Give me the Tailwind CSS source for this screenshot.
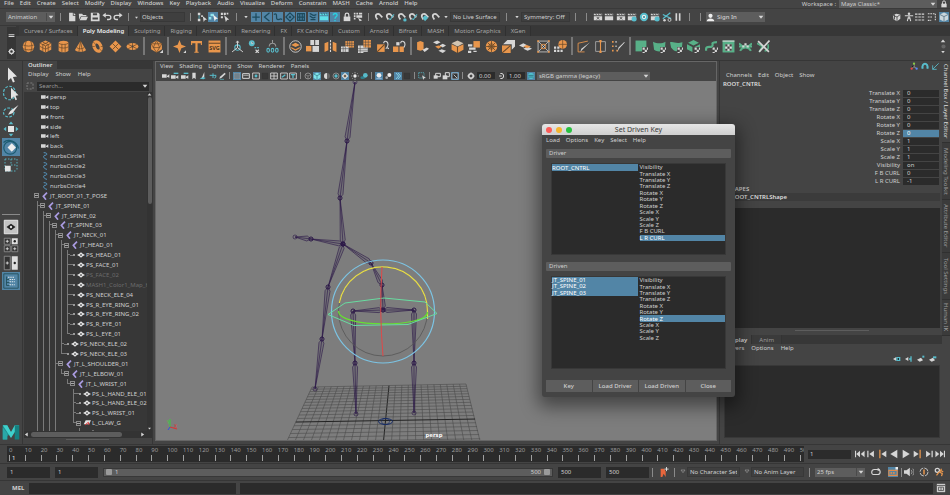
<!DOCTYPE html>
<html lang="en">

<head>
    <meta charset="UTF-8">
    <meta name="viewport" content="width=device-width, initial-scale=1.0">
    <title>Maya - Set Driven Key</title>
    <script src="https://cdn.jsdelivr.net/npm/@tailwindcss/browser@4"></script>
</head>

<body class="flex flex-col h-screen overflow-hidden bg-[#444444] text-[#cfcfcf] text-[6px] leading-[8px] font-['Noto_Sans','Open_Sans',sans-serif]">

    <!-- Main menu -->
    <header class="flex justify-between h-[9px] shrink-0 border-b border-[#3a3a3a]">
        <nav class="flex gap-[6px] pl-[4px] -mt-[2px] font-medium" data-menu="File|Edit|Create|Select|Modify|Display|Windows|Key|Playback|Audio|Visualize|Deform|Constrain|MASH|Cache|Arnold|Help"></nav>
        <div class="flex items-center gap-[3px] pr-[2px]">
            <label for="workspace">Workspace :</label>
            <div class="flex items-center bg-[#5d5d5d] w-[98px] h-[8px]">
                <select id="workspace" class="appearance-none flex-1 px-[2px] leading-[8px] outline-none"><option>Maya Classic*</option></select>
                <span class="flex w-[8px]" data-icon="down"></span>
            </div>
            <span class="flex w-[8px]" data-icon="lock"></span>
        </div>
    </header>

    <!-- Status line -->
    <div class="flex items-center h-[17px] shrink-0 pl-[6px] border-b border-[#383838]">
        <div class="flex items-center bg-[#5d5d5d] w-[49px] h-[10px]">
            <select aria-label="Menu set" class="appearance-none flex-1 min-w-0 pl-[2px] outline-none"><option>Animation</option></select>
            <span class="flex w-[9px] border-l border-[#4a4a4a]" data-icon="down"></span>
        </div>
        <i class="w-px h-[8px] bg-[#8a8a8a] mx-[5px]"></i>
        <div class="flex justify-around w-[58px]" data-icons="new open save undo redo"></div>
        <i class="w-px h-[8px] bg-[#8a8a8a] mx-[4px]"></i>
        <span class="flex w-[7px]" data-icon="downs"></span>
        <input aria-label="Selection mode" value="Objects" class="w-[45px] h-[10px] px-px bg-[#3f3f3f] border border-[#383838] outline-none">
        <i class="w-px h-[8px] bg-[#8a8a8a] mx-[5px]"></i>
        <div class="flex justify-around w-[35px]" data-icons="selh *selo selc"></div>
        <i class="w-px h-[8px] bg-[#8a8a8a] mx-[5px]"></i>
        <span class="flex w-[8px]" data-icon="downs"></span>
        <div class="flex justify-around w-[91px]" data-icons="*plus *angle *curve *surf *deform *dyn *rend *misc"></div>
        <div class="flex justify-around w-[23px]" data-icons="lock hilite"></div>
        <i class="w-px h-[8px] bg-[#8a8a8a] mx-[4px]"></i>
        <div class="flex justify-around w-[69px]" data-icons="magnet magnetb magnetc magnetb magneta magnet"></div>
        <span class="flex w-[8px]" data-icon="downs"></span>
        <input aria-label="Live surface" value="No Live Surface" class="w-[50px] h-[10px] px-[2px] bg-[#3f3f3f] border border-[#383838] outline-none">
        <i class="w-px h-[8px] bg-[#8a8a8a] mx-[6px]"></i>
        <span class="flex w-[8px]" data-icon="downs"></span>
        <input aria-label="Symmetry" value="Symmetry: Off" class="w-[49px] h-[10px] px-[2px] bg-[#3f3f3f] border border-[#383838] outline-none">
        <i class="w-px h-[8px] bg-[#8a8a8a] mx-[5px]"></i>
        <i class="w-px h-[8px] bg-[#8a8a8a] mx-[5px]"></i>
        <div class="flex justify-around w-[92px]" data-icons="clap clapb clap clapc ring clapc cut pause"></div>
        <i class="w-px h-[8px] bg-[#8a8a8a] mx-[5px]"></i>
        <i class="w-px h-[8px] bg-[#8a8a8a] mx-[5px]"></i>
        <button class="flex items-center gap-[2px] bg-[#5d5d5d] w-[59px] h-[10px] font-medium">
            <span class="flex w-[9px]" data-icon="user"></span>
            <span class="flex-1 text-left">Sign In</span>
            <span class="flex w-[8px]" data-icon="down"></span>
        </button>
        <div class="flex justify-around w-[59px] ml-auto" data-icons="cubeg figure sliders rows *cube"></div>
    </div>

    <!-- Shelf -->
    <div class="flex h-[34px] shrink-0">
        <div class="flex flex-col items-center justify-around w-[9px] ml-[7px] my-px bg-[#363636]">
            <span class="flex w-[7px]" data-icon="bars"></span>
            <span class="flex w-[7px]" data-icon="gear"></span>
        </div>
        <div class="flex-1 min-w-0">
            <nav id="shelfTabs" class="flex h-[10px] bg-[#373737] pl-[3px]"></nav>
            <div class="flex items-center h-[20px] pl-[4px]">
                <div class="flex justify-around w-[121px]" data-shelf="sphere pcube cyl cone torus plane disc"></div>
                <i class="w-[2px] h-[18px] bg-[#777777] mx-[2px]"></i>
                <div class="flex justify-around w-[18px]" data-shelf="plato"></div>
                <i class="w-[2px] h-[18px] bg-[#777777] mx-[2px]"></i>
                <div class="flex justify-around w-[52px]" data-shelf="star type svgt"></div>
                <i class="w-[2px] h-[18px] bg-[#777777] mx-[2px]"></i>
                <div class="flex justify-around w-[52px]" data-shelf="axis clock zeros"></div>
                <i class="w-[2px] h-[18px] bg-[#777777] mx-[2px]"></i>
                <div class="flex justify-around w-[121px]" data-shelf="layers combine mirror gridw gridx rotate rotateb"></div>
                <i class="w-[2px] h-[18px] bg-[#777777] mx-[2px]"></i>
                <div class="flex justify-around w-[155px]" data-shelf="extrude bridge pcube2 append wheel bevel planes xbox cubes"></div>
                <i class="w-[2px] h-[18px] bg-[#777777] mx-[2px]"></i>
                <div class="flex justify-around w-[52px]" data-shelf="knife loop pen"></div>
                <i class="w-[2px] h-[18px] bg-[#777777] mx-[2px]"></i>
                <div class="flex justify-around w-[139px]" data-shelf="uv1 uv2 uv3 uv4 uv5 uv6 uv7 uv8"></div>
                <div class="flex flex-col items-center w-[8px] ml-auto mr-[3px]">
                    <span class="flex w-[6px]" data-icon="up"></span>
                    <span class="flex w-[5px]" data-icon="dot"></span>
                    <span class="flex w-[6px]" data-icon="down"></span>
                </div>
            </div>
        </div>
    </div>

    <!-- Workspace -->
    <main class="flex flex-1 min-h-0 border-t border-[#363636]">

        <!-- Toolbox -->
        <aside class="flex flex-col items-center w-[22px] pt-[5px] shrink-0">
            <div class="flex flex-col w-[18px]" data-tools="arrow lasso brush move *spin scale"></div>
            <hr class="w-[18px] border-[#8a8a8a] mt-[40px] mb-[3px]">
            <div class="flex flex-col w-[18px]" data-tools="view1 view4 view2 *tree"></div>
            <div class="flex flex-col w-[18px] mt-auto mb-[3px]" data-tools="maya"></div>
        </aside>

        <!-- Outliner -->
        <section class="flex flex-col w-[131px] shrink-0 bg-[#444444] border-x border-[#363636]">
            <div class="bg-[#373737] h-[8px] flex"><button class="bg-[#444444] px-[5px] font-semibold text-[#dddddd]">Outliner</button></div>
            <nav class="flex gap-[7px] pl-[5px] mt-px" data-menu="Display|Show|Help"></nav>
            <div class="flex items-center gap-[3px] px-[3px] h-[12px] mt-[2px]">
                <span class="flex w-[8px]" data-icon="focus"></span>
                <div class="flex flex-1 items-center h-[9px] bg-[#2b2b2b]">
                    <input type="search" aria-label="Search" placeholder="Search..." class="flex-1 min-w-0 px-[2px] outline-none placeholder:text-[#9a9a9a]">
                    <span class="flex w-[8px]" data-icon="down"></span>
                </div>
            </div>
            <div class="flex flex-1 min-h-0 bg-[#373737] ml-px overflow-hidden">
                <ul id="outliner" class="grid auto-rows-fr h-[346px] flex-1 min-w-0 overflow-hidden pl-[10px]"></ul>
                <div class="w-[5px] flex flex-col items-center bg-[#333333]">
                    <span class="flex w-[5px]" data-icon="up"></span>
                    <span class="w-[4px] h-[107px] rounded-full bg-[#5d5d5d]"></span>
                    <span class="flex w-[5px] mt-auto" data-icon="down"></span>
                </div>
            </div>
            <div class="flex items-center h-[7px] bg-[#333333] gap-[2px] ml-px">
                <span class="flex w-[5px]" data-icon="left"></span>
                <span class="w-[91px] h-[5px] rounded-full bg-[#5d5d5d]"></span>
                <span class="flex w-[5px] ml-auto mr-[7px]" data-icon="right"></span>
            </div>
            <hr class="w-[43px] border-[#5d5d5d] mx-auto mt-px mb-[4px]">
        </section>

        <!-- Viewport panel -->
        <section class="flex flex-col flex-1 min-w-0 mx-[2px] mb-[3px] border border-[#666666]">
            <nav class="flex gap-[6px] pl-[4px]" data-menu="View|Shading|Lighting|Show|Renderer|Panels"></nav>
            <div class="flex items-center h-[11px] pl-[5px]">
                <div class="flex justify-around w-[66px]" data-panel="cam camb camb mark sharp pan pencil"></div>
                <i class="w-px h-[7px] bg-[#8a8a8a] mx-[2px]"></i>
                <div class="flex justify-around w-[66px]" data-panel="*gridp film gate dim frame frameb framec"></div>
                <i class="w-px h-[7px] bg-[#8a8a8a] mx-[2px]"></i>
                <div class="flex justify-around w-[66px]" data-panel="wire *shade half wiret *check sun blob"></div>
                <i class="w-px h-[7px] bg-[#8a8a8a] mx-[2px]"></i>
                <div class="flex justify-around w-[38px]" data-panel="*light balls *aa dim"></div>
                <i class="w-px h-[7px] bg-[#8a8a8a] mx-[2px]"></i>
                <div class="flex justify-around w-[10px]" data-panel="iso"></div>
                <i class="w-px h-[7px] bg-[#8a8a8a] mx-[2px]"></i>
                <div class="flex justify-around w-[28px]" data-panel="stack stackb *xray"></div>
                <i class="w-px h-[7px] bg-[#8a8a8a] mx-[2px]"></i>
                <div class="flex justify-around w-[12px]" data-panel="gear"></div>
                <input aria-label="Exposure" value="0.00" class="w-[18px] h-[7px] px-[2px] bg-[#2b2b2b] outline-none">
                <div class="flex justify-around w-[12px]" data-panel="contrast"></div>
                <input aria-label="Gamma" value="1.00" class="w-[18px] h-[7px] px-[2px] bg-[#2b2b2b] outline-none">
                <div class="flex justify-around w-[12px]" data-panel="*color"></div>
                <div class="flex items-center bg-[#5d5d5d] w-[113px] h-[8px]">
                    <select aria-label="View transform" class="appearance-none flex-1 px-[2px] outline-none"><option>sRGB gamma (legacy)</option></select>
                    <span class="flex w-[8px]" data-icon="down"></span>
                </div>
            </div>
            <svg id="scene" class="flex-1 min-h-0 w-full bg-[#7d7d7d]" viewBox="156 81 560 360" preserveAspectRatio="xMinYMin slice"></svg>
        </section>

        <!-- Channel box / layer editor -->
        <section class="flex flex-col w-[223px] shrink-0 pl-[2px] border-l border-[#363636]">
            <div class="flex justify-end gap-[3px] pr-[2px] h-[10px]" data-panel="triad arch diag"></div>
            <nav class="flex gap-[6px] pl-[4px]" data-menu="Channels|Edit|Object|Show"></nav>
            <h2 class="leading-[10px] font-semibold pl-px text-[#dddddd]">ROOT_CNTRL</h2>
            <table class="w-full"><tbody id="channels"></tbody></table>
            <h3 class="font-semibold pl-[5px]">SHAPES</h3>
            <h3 class="bg-[#3b3b3b] font-semibold mr-[2px] pl-[9px] text-[#dddddd]">ROOT_CNTRLShape</h3>
            <div class="bg-[#2b2b2b] mt-[7px] h-[120px] mr-[2px]"></div>
            <hr class="w-[74px] border-[#5d5d5d] mx-auto mt-[2px] mb-[4px]">
            <div class="bg-[#373737] flex h-[9px]">
                <button class="bg-[#444444] px-[4px] font-semibold text-[#dddddd]">Display</button>
                <button class="px-[7px] text-[#9a9a9a] bg-[#3b3b3b] border-x border-[#333333]">Anim</button>
            </div>
            <nav class="flex gap-[7px] pl-[4px]" data-menu="Layers|Options|Help"></nav>
            <div class="flex justify-end gap-[4px] pr-[5px] h-[13px] items-center" data-panel="lay laydn laynew laysel"></div>
            <div class="flex-1 bg-[#2b2b2b] mx-[2px] mb-[6px] border border-[#383838]"></div>
        </section>

        <nav id="sideTabs" class="flex flex-col w-[8px] shrink-0 bg-[#444444]"></nav>
    </main>

    <!-- Time slider -->
    <div class="flex items-center h-[19px] shrink-0 pl-[7px] pr-[4px] border-t border-[#363636]">
        <div class="flex-1 min-w-0 overflow-hidden bg-[#2b2b2b] h-[16px]">
            <ol id="timeline" class="flex mr-[6px] h-full text-[#9a9a9a]"></ol>
        </div>
        <input aria-label="Current frame" value="1" class="w-[43px] h-[9px] ml-[4px] px-[2px] bg-[#2b2b2b] outline-none">
        <div class="flex justify-around w-[92px] ml-[3px]" data-icons="first prev prevk back play nextk next last"></div>
    </div>

    <!-- Range slider -->
    <div class="flex items-center h-[17px] shrink-0 pl-[7px] pr-[4px] border-t border-[#363636]">
        <input aria-label="Animation start" value="1" class="w-[43px] h-[11px] px-[3px] bg-[#2b2b2b] outline-none">
        <input aria-label="Range start" value="1" class="w-[43px] h-[11px] px-[3px] ml-[5px] bg-[#2b2b2b] outline-none">
        <div class="flex flex-1 items-center gap-[3px] h-[9px] ml-[5px] px-[2px] bg-[#5d5d5d] border border-[#383838]">
            <span class="size-[6px] rounded-[1px] bg-[#9a9a9a]"></span>
            <span>1</span>
            <span class="ml-auto">500</span>
            <span class="size-[6px] rounded-[1px] bg-[#9a9a9a]"></span>
        </div>
        <input aria-label="Range end" value="500" class="w-[43px] h-[11px] px-[3px] ml-[5px] bg-[#2b2b2b] outline-none">
        <input aria-label="Animation end" value="500" class="w-[43px] h-[11px] px-[3px] ml-[5px] bg-[#2b2b2b] outline-none">
        <i class="w-px h-[9px] bg-[#8a8a8a] ml-[3px]"></i>
        <div class="flex justify-around w-[21px]" data-icons="runner"></div>
        <i class="w-px h-[9px] bg-[#8a8a8a]"></i>
        <span class="flex w-[8px] ml-[4px]" data-icon="downo"></span>
        <input aria-label="Character set" value="No Character Set" class="w-[53px] h-[10px] px-[2px] bg-[#3f3f3f] border border-[#383838] outline-none">
        <span class="flex w-[8px] ml-[3px]" data-icon="downo"></span>
        <input aria-label="Animation layer" value="No Anim Layer" class="w-[53px] h-[10px] px-[2px] bg-[#3f3f3f] border border-[#383838] outline-none">
        <i class="w-px h-[9px] bg-[#8a8a8a] mx-[5px]"></i>
        <div class="flex items-center bg-[#5d5d5d] w-[50px] h-[9px]">
            <select aria-label="Playback speed" class="appearance-none flex-1 min-w-0 px-[2px] outline-none"><option>25 fps</option></select>
            <span class="flex w-[9px] border-l border-[#4a4a4a]" data-icon="down"></span>
        </div>
        <div class="flex justify-around w-[34px] ml-[2px]" data-icons="repeat *cache"></div>
        <i class="w-px h-[9px] bg-[#8a8a8a]"></i>
        <div class="flex justify-around w-[44px]" data-icons="sound auto prefs"></div>
    </div>

    <!-- Command line -->
    <div class="flex items-center h-[15px] shrink-0 pl-[12px] pr-[4px] border-t border-[#363636]">
        <label for="mel" class="font-bold w-[17px]">MEL</label>
        <input id="mel" class="w-[207px] h-[11px] px-[2px] bg-[#2b2b2b] outline-none">
        <div class="flex-1 h-[11px] ml-[4px] bg-[#2b2b2b]"></div>
        <div class="flex ml-[3px]" data-icons="script"></div>
    </div>

    <!-- Floating dialog -->
    <div role="dialog" aria-labelledby="dialogTitle" class="absolute left-[542px] top-[124px] w-[193px] bg-[#444444] rounded-[3px] overflow-hidden shadow-[0_6px_18px_4px_rgba(0,0,0,0.45)]">
        <div class="flex items-center h-[11px] px-[4px] gap-[4px] bg-linear-to-b from-[#e6e6e6] to-[#cfcfcf] text-[#3a3a3a]">
            <button aria-label="Close window" class="size-[6px] rounded-full bg-[#fc5b57]"></button>
            <button aria-label="Minimize" class="size-[6px] rounded-full bg-[#f5b52e]"></button>
            <button aria-label="Zoom" class="size-[6px] rounded-full bg-[#27c13f]"></button>
            <h1 id="dialogTitle" class="flex-1 text-center text-[7px] pr-[30px]">Set Driven Key</h1>
        </div>
        <nav class="flex gap-[6px] pl-[4px] pt-px" data-menu="Load|Options|Key|Select|Help"></nav>
        <div class="px-[4px] pt-[5px]">
            <h2 class="bg-[#5d5d5d] h-[9px] px-[3px] rounded-[1px]">Driver</h2>
            <div class="grid grid-cols-2 gap-[2px] h-[92px] bg-[#2b2b2b] border border-[#383838] mx-[5px] mt-[5px] leading-none">
                <ul id="driverNodes"></ul>
                <ul id="driverAttrs"></ul>
            </div>
            <h2 class="bg-[#5d5d5d] h-[9px] px-[3px] mt-[7px] rounded-[1px]">Driven</h2>
            <div class="grid grid-cols-2 gap-[2px] h-[93px] bg-[#2b2b2b] border border-[#383838] mx-[5px] mt-[5px] leading-none">
                <ul id="drivenNodes"></ul>
                <ul id="drivenAttrs"></ul>
            </div>
            <div class="grid grid-cols-4 gap-px mt-[11px] mb-[5px]">
                <button class="bg-[#5d5d5d] h-[12px] font-medium">Key</button>
                <button class="bg-[#5d5d5d] h-[12px] font-medium">Load Driver</button>
                <button class="bg-[#5d5d5d] h-[12px] font-medium">Load Driven</button>
                <button class="bg-[#5d5d5d] h-[12px] font-medium">Close</button>
            </div>
        </div>
    </div>

    <script>
        // Icon shapes, all on a 12 x 12 grid
        const O = '#e8964c', W = '#d6d6d6', C = '#58bccb', G = '#58b088', D = '#444444';
        const clapper = `<path fill="${W}" d="M1 2h10v2H1zM1 5h10v5H1z"/><path stroke="${D}" d="M3 1.500l1.500 2.500M6 1.500l1.500 2.500M9 1.500l1.500 2.500"/>`;
        const magnet = `<path fill="none" stroke="${W}" stroke-width="2" d="M4 9L2.500 6.500C1 3 4.500 1 6.800 3L10 6.500"/>`;
        const checker = `<path fill="${D}" d="M6.500 6.500h5.500v5.500H6.500z"/><path fill="${W}" d="M7 7h2v2H7zM11 7h1v2h-1zM9 9h2v2H9zM7 11h2v1H7z"/>`;
        const icons = {
            down: `<path fill="${W}" d="M2.500 4h7L6 8.500z"/>`,
            downs: `<path fill="${W}" d="M3.500 4.500h5L6 8z"/>`,
            downo: `<path fill="none" stroke="#999" d="M3 3h6L6 7z"/>`,
            up: `<path fill="${W}" d="M1.500 8.500h9L6 3z"/>`,
            left: `<path fill="${W}" d="M9 1v10L2 6z"/>`,
            right: `<path fill="${W}" d="M3 1v10l7-5z"/>`,
            dot: `<circle cx="6" cy="6" r="5" fill="#666"/>`,
            bars: `<path fill="${W}" d="M1 4h10v1.500H1zM1 7h10v1.500H1z"/>`,
            lock: `<path fill="${W}" d="M2 5.500h8V11H2z"/><path fill="none" stroke="${W}" stroke-width="1.500" d="M3.800 6V3.500a2.200 2.200 0 0 1 4.400 0V6"/>`,
            gear: `<circle cx="6" cy="6" r="3.400" fill="none" stroke="${W}" stroke-width="2.400"/><path stroke="${W}" stroke-width="1.500" d="M6 .5v2M6 9.500v2M.5 6h2M9.500 6h2"/>`,
            focus: `<path fill="none" stroke="#999" stroke-dasharray="3 2" d="M1.500 1.500h9v9h-9z"/>`,
            new: `<path fill="${W}" d="M2.500 1h4.500v3.500h3V11H2.500zM8 1l2.500 2.500H8z"/>`,
            open: `<path fill="${W}" d="M1 2h4l1 1.500h4V5H3.500L1.500 9z"/><path fill="${W}" d="M4 5.800h8L10 10H2z"/>`,
            save: `<path fill="${W}" d="M1 1h9l1.500 1.500V11H1z"/><path fill="${D}" d="M3.500 1.500h5V4h-5zM3 6.500h6.500V9H3z"/>`,
            undo: `<path fill="none" stroke="${W}" stroke-width="1.600" d="M3 4h5c3.500 0 3.500 5 0 5H6"/><path fill="${W}" d="M4.500 1v6L.5 4z"/>`,
            redo: `<path fill="none" stroke="${W}" stroke-width="1.600" d="M9 4H4C.5 4 .5 9 4 9h2"/><path fill="${W}" d="M7.500 1v6l4-3z"/>`,
            selh: `<path fill="${W}" d="M1 1h3v3H1zM1 8h3v3H1zM5 4h2v2H5zM7 5l5 4-2.500.5L8 12z"/><path stroke="${C}" d="M2.500 4v4"/>`,
            selo: `<path fill="#8fe4ec" d="M1 6h3v3H1zM3 2h4v3H3z"/><path fill="#eee" d="M6 3l6 5-2.500.5L8 11z"/>`,
            selc: `<path fill="${W}" d="M1 1h2.500v2.500H1zM4.500 1H7v2.500H4.500zM1 5h2.500v2.500H1zM8 1h2v2H8zM5 4l6 5-2.500.5L7 12z"/>`,
            plus: `<path stroke="#1d4a5c" stroke-width="1.500" d="M6 1.500v9M1.500 6h9"/>`,
            angle: `<path fill="none" stroke="#1d4a5c" stroke-width="1.500" d="M9 1L3 6l6 5"/>`,
            curve: `<path fill="none" stroke="#1d4a5c" stroke-width="1.500" d="M1 3c6-3 1 6 5 6s2-2 5 0"/>`,
            surf: `<path fill="none" stroke="#1d4a5c" stroke-width="1.500" d="M6 1l5 5-5 5-5-5zM6 4.500v3M4.500 6h3"/>`,
            deform: `<path fill="none" stroke="#1d4a5c" stroke-width="1.500" d="M2 2h8v8H2zM4.500 2v8M7.500 2v8M2 6h8"/>`,
            dyn: `<path fill="none" stroke="#1d4a5c" stroke-width="1.500" d="M2 2c3 0 3 4 8 1M2 5c3 0 2 4 7 1M3 9h6"/>`,
            rend: `<path fill="#5fe0e8" d="M1 2h10v2H1zM1 5h10v5H1z"/><path stroke="#2f6f80" d="M3 1l1 3M6 1l1 3M9 1l1 3"/>`,
            misc: `<path fill="none" stroke="#2ad0e0" stroke-width="1.600" d="M4 4c0-3 4.500-3 4.500 0C8.500 6 6 5.500 6 8M6 9.500V11"/>`,
            hilite: `<path fill="${W}" d="M1 1h2v2H1zM4 1h2v2H4zM7 1h4v2H7zM1 4h2v2H1zM4 4h7v3H4zM1 7h2v2H1zM6 7l5 3-3 1z"/>`,
            magnet: magnet,
            magneta: magnet + `<path fill="${C}" d="M6 4l4 3-4 4-3-4z"/>`,
            magnetb: magnet + `<path fill="none" stroke="${C}" stroke-width="1.300" d="M5 8c3 3 2-3 6-5"/>`,
            magnetc: magnet + `<circle cx="9.500" cy="9.500" r="2" fill="${C}"/>`,
            clap: clapper + `<path fill="none" stroke="${D}" d="M4.500 6l3 3M7.500 6l-3 3"/>`,
            clapb: clapper,
            clapc: clapper + `<circle cx="8.500" cy="8.500" r="3" fill="${C}"/>`,
            ring: `<circle cx="6" cy="6" r="3.800" fill="#eee" stroke="${C}" stroke-width="2.400"/><circle cx="6" cy="6" r="1.200" fill="#289"/>`,
            cut: `<path stroke="${C}" stroke-width="1.500" d="M1 3l10 5M1 8l9-7"/><circle cx="3" cy="10" r="1.500" fill="${W}"/><circle cx="9" cy="9.500" r="1.800" fill="none" stroke="${W}"/>`,
            pause: `<path fill="${W}" d="M3 1.500h2v9H3zM7 1.500h2v9H7z"/>`,
            user: `<circle cx="6" cy="3.800" r="2.800" fill="#eee"/><path fill="#eee" d="M1 11c0-5 10-5 10 0z"/>`,
            cubeg: `<path fill="${W}" d="M1 4l4-2 5 1v5l-4 3-4-2z"/><path stroke="${D}" fill="none" d="M1 4l5 2 4-3M6 6v5M3 3v6"/>`,
            figure: `<circle cx="6" cy="2" r="1.500" fill="${W}"/><path fill="none" stroke="${W}" stroke-width="1.300" d="M1 4.500h10M6 4v4M4 11l1-4h2l1 4"/>`,
            sliders: `<path stroke="${W}" stroke-width="1.300" stroke-dasharray="3 1" d="M0 2.500h12M0 6h12M0 9.500h12"/>`,
            rows: `<path fill="none" stroke="${W}" stroke-width="1.300" stroke-dasharray="2 1" d="M1 2h9v8M1 6h6M1 10h4"/>`,
            cube: `<path fill="#c9d6dd" d="M6 .5L11 3v6l-5 2.500L1 9V3z"/><path stroke="#5a7484" fill="none" d="M1 3l5 2.500L11 3M6 5.500v6"/>`,
            sphere: `<circle cx="6" cy="6" r="5.300" fill="${O}"/><path stroke="#6b4a2a" stroke-width=".7" fill="none" d="M1 4.500c3 1.500 7 1.500 10 0M1 8c3 1.500 7 1.500 10 0M4 1c-1.500 3-1.500 7 0 10M8 1c1.500 3 1.500 7 0 10"/>`,
            pcube: `<path fill="${O}" d="M6 .5L11.300 3v6L6 11.500.7 9V3z"/><path stroke="#6b4a2a" stroke-width=".7" fill="none" d="M1 3l5 2.500L11 3M6 5.500v6M1 6l5 2.500L11 6M3.500 4v6M8.500 4v6M3.500 2l5 2.300M8.500 2l-5 2.300"/>`,
            cyl: `<path fill="${O}" d="M1.500 2.500C1.500 0 10.500 0 10.500 2.500v7c0 2.500-9 2.500-9 0z"/><path stroke="#6b4a2a" stroke-width=".7" fill="none" d="M1.500 3c2 1.500 7 1.500 9 0M1.500 6.300c2 1.500 7 1.500 9 0M4.500 4v7M7.500 4v7"/>`,
            cone: `<path fill="${O}" d="M6 1l5 8c0 2.500-10 2.500-10 0z"/><path stroke="#6b4a2a" stroke-width=".7" fill="none" d="M6 1L4.500 11M6 1l2 10M2.500 7c2 1.500 5 1.500 7 0"/>`,
            torus: `<ellipse cx="6" cy="6" rx="3" ry="4.500" transform="rotate(-25 6 6)" fill="none" stroke="${O}" stroke-width="3"/><path stroke="#6b4a2a" stroke-width=".6" d="M2 2l2 1.500M1 6h2.500M9 6h2.500M8 8.500L10 10"/>`,
            plane: `<path fill="${O}" d="M6 .5L11.500 6 6 11.500.5 6z"/><path stroke="#6b4a2a" stroke-width=".8" d="M3.200 3.200l5.600 5.600M8.800 3.200L3.200 8.800"/>`,
            disc: `<ellipse cx="6" cy="6" rx="5.500" ry="3.300" fill="${O}"/><path stroke="#6b4a2a" stroke-width=".7" d="M2 4l8 4M10 4L2 8M6 2.700v6.600"/><circle cx="6" cy="6" r=".9" fill="${D}"/>`,
            plato: `<path fill="${O}" d="M6 .5l5 3v5l-5 3-5-3v-5z"/><path fill="none" stroke="#6b4a2a" stroke-width=".7" d="M1 3.500h10L6 11.500zM6 .5L3 7h6z"/><path fill="${W}" d="M12 9v3H9z"/>`,
            star: `<path fill="${O}" d="M6 0l1.700 4.300L12 6 7.700 7.700 6 12 4.300 7.700 0 6l4.300-1.700z"/><path fill="${W}" d="M12 9.500V12H9.500z"/>`,
            type: `<path fill="none" stroke="${O}" stroke-width="2" d="M1 2h10M6 2v9"/><path stroke="${O}" d="M1.500 1v3.500M10.500 1v3.500M4 11.300h4"/>`,
            svgt: `<path fill="${O}" d="M.5.5h11v11H.5z"/><path stroke="#6b4a2a" d="M.5 3h11"/><text x="6" y="9" font-size="5" font-weight="bold" text-anchor="middle" fill="#4a3420">SVG</text>`,
            axis: `<circle cx="6" cy="7" r="2.500" fill="none" stroke="${C}"/><path stroke="${W}" fill="none" stroke-width=".9" d="M6 1v6L1 11M6 7l5 4M4.800 2.500L6 .8l1.200 1.700"/>`,
            clock: `<circle cx="3.500" cy="3" r="2.700" fill="${C}"/><path stroke="${C}" stroke-dasharray="1.500 1" d="M6 7h5"/><path stroke="${W}" d="M3.500 1.500V3H5M7 9l3 3M10 9l-3 3"/>`,
            zeros: `<path fill="none" stroke="#999" d="M3 6c0-4 6-4 6 0M6 0v3"/><g fill="none" stroke="${C}"><ellipse cx="2" cy="9.500" rx="1.200" ry="1.800"/><ellipse cx="6" cy="9.500" rx="1.200" ry="1.800"/><ellipse cx="10" cy="9.500" rx="1.200" ry="1.800"/></g>`,
            layers: `<circle cx="6" cy="6" r="5.300" fill="none" stroke="${W}" stroke-width=".8"/><path fill="${O}" d="M6 2.500l4 2-4 2-4-2z"/><path fill="${O}" d="M2 6.500l4 2 4-2v1l-4 2.500-4-2.500z"/>`,
            combine: `<path fill="${W}" d="M4 0h3.500v4.500H4zM8.500 0H12v4.500H8.500z"/><path fill="${O}" d="M0 5.500h5v5H0z"/><path fill="${W}" d="M6 5.500h6V11H6z"/>`,
            mirror: `<path fill="${O}" d="M.5 3L4 1.500v8L.5 11zM11.500 3L8 1.500v8l3.500 1.500z"/><path stroke="${W}" stroke-dasharray="2 1" d="M6 0v12"/>`,
            gridw: `<path fill="${O}" d="M4 1h8v6H4z"/><path fill="${W}" d="M0 6h7v5H0z"/><path stroke="${D}" stroke-width=".5" d="M6 1v5M8 1v5M10 1v6M4 3h8M4 5h8M2 6v5M4 6v5M0 8h7"/>`,
            gridx: `<path fill="${O}" d="M5 0h7v7H5z"/><path fill="${W}" d="M0 5h5v7H0zM5 7h4v4H5z"/><path stroke="${D}" stroke-width=".5" d="M7 0v7M9.500 0v7M5 2h7M5 4.500h7M2 5v7M0 8h9M0 10h9"/>`,
            rotate: `<path fill="${O}" d="M1 4h7v7H1z"/><path fill="none" stroke="${W}" d="M7 3c1-4 6-1 3 4M9 8l1-1 2 1"/><path stroke="#6b4a2a" d="M1 11l7-7"/>`,
            rotateb: `<path fill="${O}" d="M0 6h5v5H0zM6 6h4v5H6z"/><path fill="${W}" d="M3 2h3v3H3z"/><path fill="none" stroke="${W}" d="M7 3c1-4 6-1 3 4"/>`,
            extrude: `<path fill="${O}" d="M1 2l3-1 3 1v7l-3 1-3-1z"/><path fill="${W}" d="M6 9l4-2 2 1-4 3z"/>`,
            bridge: `<path fill="${W}" d="M0 2l4-1.500L7 2 3.500 4zM6 5l3-1.500L12 5 9 7z"/><path fill="${O}" d="M2 6l3-1 3 1-3 2z"/><path fill="${W}" d="M5 10l3-1.500L12 10l-3 2z"/>`,
            pcube2: `<path fill="${O}" d="M.5 4v5L6 12V6.500zM11.500 4v5L6 12V6.500z"/><path fill="#d2c4b2" d="M6 .5L11.500 3 6 6 .5 3z"/><path stroke="#6b4a2a" d="M6 6v6"/>`,
            append: `<path fill="${O}" d="M5 1h6v6H5z"/><path fill="${W}" d="M0 4h4v2H0zM1 7h6v2H1zM0 10h3v2H0zM5 10h3v1H5z"/>`,
            wheel: `<circle cx="6" cy="6" r="5.300" fill="${O}"/><path stroke="#6b4a2a" fill="none" stroke-width=".8" d="M6 1v10M1 6h10M2.500 2.500l7 7M9.500 2.500l-7 7"/><circle cx="6" cy="6" r="2.500" fill="none" stroke="#6b4a2a" stroke-width=".8"/>`,
            bevel: `<path fill="${W}" d="M5 0h7v6L9 9V4H1z"/><path fill="${O}" d="M0 5h8v7H0z"/><path stroke="#6b4a2a" d="M0 12l8-7"/>`,
            planes: `<path fill="${W}" d="M0 5l4-2 4 2-4 2zM4 8l4-2 4 2-4 2z"/><path fill="${O}" d="M4 6l3-1.500L11 6 7.500 7.500z"/>`,
            xbox: `<path fill="none" stroke="${W}" stroke-width=".7" d="M1 1h10v10H1zM1 1l10 10M11 1L1 11"/><path fill="none" stroke="${O}" stroke-width=".8" d="M4 4h4v4H4zM.5.5h1v1h-1zM10.500.5h1v1h-1zM.5 10.500h1v1h-1zM10.500 10.500h1v1h-1z"/>`,
            cubes: `<circle cx="8" cy="4" r="4" fill="${O}"/><path stroke="#6b4a2a" stroke-width=".7" d="M4 4h8M8 0v8"/><path fill="${W}" d="M0 6h2v2H0zM3 6h2v2H3zM0 9h2v2H0zM3 9h2v2H3zM6 9h2v2H6z"/>`,
            knife: `<path fill="none" stroke="${O}" stroke-width=".8" d="M1 11V3l9-2M1 11h6"/><path fill="${W}" d="M12 2L5 9l-2 2 1-3z"/>`,
            loop: `<path fill="none" stroke="#aaa" stroke-width=".8" d="M1.500 1.500h9v9h-9z"/><path stroke="${O}" d="M6 1v10"/><path fill="${O}" d="M5 0h2v2H5zM5 10h2v2H5z"/>`,
            pen: `<path fill="${O}" d="M0 1h1.500v1.500H0zM0 5h1.500v1.500H0zM0 9h1.500v1.500H0zM4 9h1.500v1.500H4z"/><path fill="#aaa" d="M3 1h1.500v1.500H3zM3 5h1.500v1.500H3z"/><path fill="${W}" d="M12 2L6.500 8 5 11l1-4 5-5z"/>`,
            uv1: `<path fill="${G}" d="M.5.5h10v10H.5z"/>` + checker,
            uv2: `<path fill="${G}" d="M0 1.500c4 2 8 2 11.500 0L11 9c-4 2-7 2-10 0z"/>` + checker,
            uv3: `<path fill="${G}" d="M0 2c4-1 5 2 11.500 0L11 7c-4 5-7 4-10 0z"/>` + checker,
            uv4: `<path fill="${G}" d="M6 0l5 2.500L6 5 1 2.500zM0 4l5 2.500V11L0 8.500zM12 4L7 6.500V11l5-2.500z"/>` + checker,
            uv5: `<path fill="none" stroke="${G}" stroke-width="2" d="M1 10V8c0-3 7 0 6-4C6 2 10 2 11 2"/>` + checker,
            uv6: `<path fill="${G}" d="M.5.5h11v11H.5z"/><path fill="#ddd" d="M3 4h6v6H3z"/><path fill="${D}" d="M3 4h2v2H3zM7 4h2v2H7zM5 6h2v2H5zM3 8h2v2H3zM7 8h2v2H7z"/><path stroke="#ddd" d="M.5 1h11"/>`,
            uv7: `<path fill="none" stroke="${G}" stroke-width="1.800" d="M0 3c3 4 9 4 12 0M1 10c2-4 8-4 10 0M0 6h12"/><path fill="${W}" d="M5 3h2v2H5zM7 5h2v2H7zM3 5h2v2H3z"/>`,
            uv8: `<path fill="none" stroke="${G}" stroke-width="1.500" d="M0 3l5 3-3 5M7 10c3 0 4-3 3-6"/><path stroke="${W}" stroke-width="1.500" d="M1 1l10 10M11.500.5L2 11"/>`,
            cam: `<path fill="${W}" d="M0 3.500h7v5H0zM7.500 6L11 3.500v5L7.500 7z"/>`,
            camb: `<path fill="${W}" d="M0 5h7v5H0zM7.500 7L11 5v5L7.500 8.500z"/><path stroke="${C}" stroke-width="2" d="M4 2h7"/>`,
            mark: `<path fill="${W}" d="M3.500 1h5v10L6 8.500 3.500 11z"/>`,
            sharp: `<path fill="${C}" d="M1 10l5-3 4 2-3 2z"/><path fill="${W}" d="M8 0v7L4 9z"/>`,
            pan: `<path fill="none" stroke="${C}" stroke-width="1.500" d="M1 5h10M6 2v7M8 9c3 0 3-3 1-4"/>`,
            pencil: `<path fill="${W}" d="M10 1l1.500 2L5 9l-3 1 1-3z"/><path stroke="${C}" d="M3 11h6"/>`,
            gridp: `<path fill="#8494a0" d="M1.500 1.500h9v9h-9z"/><path stroke="#50606c" stroke-width=".6" d="M4.500 1.500v9M7.500 1.500v9M1.500 4.500h9M1.500 7.500h9"/>`,
            film: `<path fill="none" stroke="${W}" stroke-width="1.500" d="M1 2.500h10v7H1z"/><path stroke="${W}" d="M2 5h8"/>`,
            gate: `<path fill="none" stroke="${W}" stroke-width="1.300" d="M1 1.500h10v9H1z"/><circle cx="6" cy="6" r="2.200" fill="${C}"/>`,
            dim: `<path fill="#383838" stroke="#333" d="M2 2h8v8H2z"/>`,
            frame: `<path fill="none" stroke="${W}" stroke-width="1.300" d="M1 1.500h10v9H1zM6 1.500v9M1 6h10"/>`,
            frameb: `<path fill="none" stroke="${W}" stroke-width="1.300" d="M1 1.500h10v9H1z"/><path stroke="${C}" stroke-width="2" d="M3 8l5-4"/>`,
            framec: `<path fill="none" stroke="${W}" stroke-width="1.300" d="M1 1.500h10v9H1z"/><path stroke="${C}" stroke-width="2" d="M3 4h6M6 4v5"/>`,
            wire: `<circle cx="6" cy="6" r="4.500" fill="none" stroke="#aaa"/><path fill="none" stroke="#aaa" stroke-width=".8" d="M2 4l4 2 4-2M6 6v4.500"/>`,
            shade: `<path fill="#7fe3ea" d="M6 1l5 2v6l-5 2.500L1 9V3z"/><path stroke="#2f6f80" fill="none" d="M1 3l5 2.500L11 3M6 5.500v6"/>`,
            half: `<circle cx="6" cy="6" r="4.500" fill="#666"/><path fill="${W}" d="M6 1.500a4.500 4.500 0 0 0 0 9z"/>`,
            wiret: `<circle cx="6" cy="6" r="4.500" fill="none" stroke="#aaa"/><circle cx="6" cy="6" r="2.500" fill="${C}"/>`,
            check: `<path fill="#e8e8e8" d="M6 1l5 5-5 5-5-5z"/><path fill="#6b5a48" d="M6 3.500L8.500 6 6 8.500 3.500 6z"/>`,
            sun: `<circle cx="6" cy="6" r="2.500" fill="#eee"/><path stroke="#ccc" d="M6 0v2M6 10v2M0 6h2M10 6h2M2 2l1 1M10 2L9 3M2 10l1-1"/>`,
            blob: `<ellipse cx="4" cy="8.500" rx="3.500" ry="2" fill="#2f7f8c"/><circle cx="8" cy="5" r="3.500" fill="${C}"/>`,
            light: `<circle cx="6" cy="5" r="3.500" fill="#eee"/><path stroke="#9bd" stroke-width="1.500" d="M2 10h8"/>`,
            balls: `<circle cx="8" cy="4.500" r="3" fill="#eee"/><circle cx="4" cy="8.500" r="2" fill="#aaa"/>`,
            aa: `<path fill="none" stroke="#8fd6e6" stroke-width="1.300" d="M3 1.500L7 6l-4 4.500M6 1.500L10 6l-4 4.500"/>`,
            iso: `<path fill="none" stroke="${C}" stroke-dasharray="2 1" d="M1 1h8v8H1z"/><path fill="${W}" d="M6 5l6 4-3 .5L8 12z"/>`,
            stack: `<path fill="none" stroke="${W}" stroke-width="1.500" d="M4 2h7v5H4z"/><path fill="${W}" d="M1 5h6v5H1z"/>`,
            stackb: `<path fill="none" stroke="${W}" stroke-width="1.500" d="M5 1h6v6H5z"/><path fill="${W}" d="M1 5h7v6H1z"/>`,
            xray: `<path fill="#333" stroke="#bcd" d="M1.500 1.500h9v9h-9z"/><path stroke="#fff" d="M4 4l5 5"/>`,
            contrast: `<circle cx="6" cy="6" r="4" fill="none" stroke="${W}" stroke-width="1.500"/><path fill="${D}" d="M0 0h5v12H0z"/><path stroke="${W}" stroke-width="1.500" d="M3 6h4"/>`,
            color: `<circle cx="6" cy="6" r="4.500" fill="#51c6d4"/><path stroke="#24505c" d="M2 5h8M2 7.500h8"/>`,
            triad: `<path stroke="#aaa" stroke-width="1.200" d="M6 2v5L2 10M6 7l4 3"/><circle cx="6" cy="2.500" r="1.700" fill="#8c4"/><circle cx="2.500" cy="10" r="1.700" fill="#e44"/><circle cx="10" cy="10" r="1.700" fill="#58f"/>`,
            arch: `<path fill="none" stroke="${C}" stroke-width="3" d="M2.500 10C0 0 12 0 9.500 10"/>`,
            diag: `<path fill="none" stroke="${C}" stroke-width="1.300" d="M1 11L10 2M1 5v6h6"/>`,
            lay: `<path fill="${W}" d="M0 6l5-3v6z"/><path stroke="${C}" stroke-width="2" d="M6 4h4v4H6z"/>`,
            laydn: `<path fill="${W}" d="M0 6l5-3v6z"/><path stroke="${C}" stroke-width="2" d="M9 2v8M6 6h3"/>`,
            laynew: `<path fill="${W}" d="M0 7l6-3 3 4-5 2z"/><path fill="${C}" d="M8 1h3v3H8z"/>`,
            laysel: `<path fill="${W}" d="M0 7l6-3 3 4-5 2z"/><path fill="${C}" d="M6 2h5v3H6z"/>`,
            arrow: `<path fill="#e4e4e4" d="M4 1l6 6-2.700.3L8.500 10.500l-1.200.5L6 8 4 9.800z"/>`,
            lasso: `<ellipse cx="5" cy="6" rx="4" ry="4.500" fill="none" stroke="${C}" stroke-width=".8" stroke-dasharray="1.800 1"/><path fill="#e4e4e4" d="M6 2.500l5 5-2 .3 1 2.500-1 .5-1-2.500L6 10z"/>`,
            brush: `<ellipse cx="4.500" cy="7" rx="3.500" ry="3" fill="none" stroke="${C}" stroke-width=".8" stroke-dasharray="1.800 1"/><path fill="#e4e4e4" d="M11 2L7 7.500 4 8.500 5.500 6z"/>`,
            move: `<path fill="#e4e4e4" d="M4 4h4v4H4z"/><path fill="${C}" d="M6 1l1.500 1.800h-3zM6 11l1.500-1.800h-3zM1 6l1.800-1.500v3zM11 6L9.200 4.500v3z"/>`,
            spin: `<circle cx="5.500" cy="6.500" r="4.300" fill="none" stroke="#1c5b70" stroke-width=".8"/><path fill="none" stroke="#1c5b70" stroke-width=".8" d="M1 3c3-3 9-1 10 4"/><path fill="#eee" d="M6.500 3.500l2.800 2.800-2.800 2.800-2.800-2.800z"/>`,
            scale: `<path fill="none" stroke="${C}" stroke-width=".6" stroke-dasharray="1 1" d="M2 2h8v8M2 2v8h8M6 2v4h4"/><path fill="#e4e4e4" d="M2 6.500h3.800v3.800H2z"/>`,
            view1: `<path fill="#c4c4c4" stroke="#eee" stroke-width=".6" d="M1.500 1.500h9v9h-9z"/><path fill="#222" d="M6 3.800l3 2.200-3 2.200L3 6z"/><circle cx="6" cy="6" r=".8" fill="#ddd"/>`,
            view4: `<path fill="#333" stroke="#999" stroke-width=".5" d="M1.500 1.500h4v4h-4zM1.500 6.500h4v4h-4zM6.500 6.500h4v4h-4z"/><path fill="#ddd" d="M6.500 1.500h4v4h-4z"/><path stroke="#ddd" stroke-width=".6" d="M3.500 2.500v2M2.500 3.500h2M3.500 7.500v2M2.500 8.500h2M8.500 7.500v2M7.500 8.500h2"/><circle cx="8.500" cy="3.500" r=".8" fill="#222"/>`,
            view2: `<path fill="#333" stroke="#999" stroke-width=".5" d="M1.500 1.500h4v9h-4z"/><path fill="#ddd" d="M6.500 1.500h4v9h-4z"/><path stroke="#ddd" stroke-width=".6" d="M3.500 5v2M2.500 6h2"/><circle cx="8.500" cy="6" r=".8" fill="#222"/>`,
            tree: `<path fill="none" stroke="#24505c" stroke-width=".6" d="M1.200 1.200h9.600v9.600H1.200zM3 3v6h2M3 5h2M3 7h2"/><path stroke="#e0e8ec" stroke-width=".8" stroke-dasharray="1 .5" d="M4 3.500h4.500M5 5h3.500M5 6.500h3.500M5 8.500h3.500"/>`,
            maya: `<path fill="#1f8f8f" d="M.5 1.500h3L6 6.500 3.500 9v2h-3z"/><path fill="#3fd0cc" d="M.5 1.500h3L6 6l2.500-4.500h3L6 10z"/><path fill="#158080" d="M8.500 1.500h3V11h-3V6z"/><path fill="#2aa8a8" d="M.5 3L3.500 7v4h-3z"/>`,
            first: `<path fill="${W}" d="M0 2h1.300v8H0zM6 2v8L1.500 6zM11.500 2v8L7 6z"/>`,
            prev: `<path fill="${W}" d="M1.500 2H3v8H1.500zM9.500 2v8L4 6z"/>`,
            prevk: `<path fill="${O}" d="M1.500 1H3v10H1.500z"/><path fill="${W}" d="M10 2v8L4 6z"/>`,
            back: `<path fill="${W}" d="M10 1v10L1.500 6z"/>`,
            play: `<path fill="${W}" d="M2 1v10l8.500-5z"/>`,
            nextk: `<path fill="${O}" d="M9 1h1.500v10H9z"/><path fill="${W}" d="M2 2v8l6-4z"/>`,
            next: `<path fill="${W}" d="M9 2h1.500v8H9zM2.500 2v8L8 6z"/>`,
            last: `<path fill="${W}" d="M10.700 2H12v8h-1.300zM.5 2v8L5 6zM6 2v8l4.500-4z"/>`,
            runner: `<path fill="#e8663c" d="M2 2h4l2 3v7L5.500 8 4 12H2z"/><path stroke="#eee" d="M9 0v5M6.500 2.500h5"/>`,
            repeat: `<path fill="none" stroke="${W}" stroke-width="1.400" d="M3 9h5c4 0 4-6 0-6H4C0 3 0 9 3 9"/><path fill="${W}" d="M8 1v4l3-2z"/>`,
            cache: `<path fill="none" stroke="#e08a4a" stroke-width="1.300" d="M1 10V4h10v6z"/><path fill="#e08a4a" d="M3 6h2v2H3zM6 6h2v2H6z"/><path fill="#eee" d="M9 0h3v3H9z"/>`,
            sound: `<path fill="${W}" d="M0 4h3l4-3v10L3 8H0z"/><path fill="none" stroke="#aaa" d="M8.500 3.500c1.500 1.500 1.500 3.500 0 5M10.500 2c2 2.500 2 5.500 0 8"/>`,
            auto: `<circle cx="6" cy="6" r="4.800" fill="none" stroke="${W}" stroke-dasharray="6 1.500"/><path stroke="${O}" stroke-width="1.800" d="M6 3v6"/>`,
            prefs: `<circle cx="4" cy="4" r="2.500" fill="none" stroke="${W}" stroke-width="1.500"/><path fill="none" stroke="${O}" stroke-width="1.500" d="M9 2L7 6l3 2-1 3M6 6L3 10M8 4l3 2"/>`,
            script: `<path fill="#ccc" d="M1 1h10v10H1z"/><path fill="none" stroke="#555" d="M1 3h10M3 5h6v4H3zM6 5v4"/>`,
            joint: `<path fill="none" stroke="#a99be0" stroke-width="2.500" d="M9 1L3.500 6.500l4 5"/>`,
            nurbs: `<path fill="none" stroke="#5aa6d8" stroke-width="1.300" d="M4 1c7 0 5 4 2 4s-3 5 3 6"/>`,
            mesh: `<path fill="#e4e4e4" d="M6 2l2.500 2L12 6 8.500 8 6 10 3.500 8 0 6l3.500-2z"/><circle cx="6" cy="6" r="1.300" fill="#333"/>`,
            group: `<path fill="#e4e4e4" d="M4 2h8l-3 6H1z"/><path stroke="#d33" stroke-width="1.500" d="M3 9l5-4M8 5l1 4"/>`
        };
        const svg = (name, cls) => `<svg viewBox="0 0 12 12" class="${cls}">${icons[name]}</svg>`;

        // Toolbars: a leading * marks a switched-on button
        function fillBar(attr, cls, on) {
            document.querySelectorAll(`[data-${attr}]`).forEach(bar => {
                bar.innerHTML = bar.dataset[attr].split(' ').map(item => {
                    const name = item.replace('*', '');
                    return `<button aria-label="${name}" class="${item[0] === '*' ? on : ''}">${svg(name, cls)}</button>`;
                }).join('');
            });
        }
        fillBar('icons', 'size-[10px]', 'bg-[#5285a6]');
        fillBar('shelf', 'size-[13px]', '');
        fillBar('panel', 'size-[8px]', 'bg-[#5285a6]');
        fillBar('tools', 'size-[18px]', 'bg-[#5285a6]');
        document.querySelectorAll('[data-icon]').forEach(el => el.innerHTML = svg(el.dataset.icon, 'w-full'));

        document.querySelectorAll('[data-menu]').forEach(nav => {
            nav.innerHTML = nav.dataset.menu.split('|').map(t => `<button>${t}</button>`).join('');
        });

        document.getElementById('shelfTabs').innerHTML =
            ['Curves / Surfaces', 'Poly Modeling', 'Sculpting', 'Rigging', 'Animation', 'Rendering', 'FX', 'FX Caching', 'Custom', 'Arnold', 'Bifrost', 'MASH', 'Motion Graphics', 'XGen']
                .map(t => `<button class="pl-[5px] pr-[4px] border-r border-[#303030] ${t === 'Poly Modeling' ? 'bg-[#444444] text-[#eeeeee] font-semibold' : 'bg-[#3b3b3b] text-[#a5a5a5]'}">${t}</button>`).join('');

        document.getElementById('sideTabs').innerHTML =
            [['Channel Box / Layer Editor', 'h-[82px] text-[#dddddd]'], ['Modeling Toolkit', 'h-[57px] bg-[#3b3b3b] text-[#9a9a9a]'], ['Attribute Editor', 'h-[53px] bg-[#3b3b3b] text-[#9a9a9a]'], ['Tool Settings', 'h-[47px] bg-[#3b3b3b] text-[#9a9a9a]'], ['Human IK', 'h-[36px] bg-[#3b3b3b] text-[#9a9a9a]']]
                .map(([t, c]) => `<button class="[writing-mode:vertical-rl] whitespace-nowrap border-b border-[#303030] ${c}">${t}</button>`).join('');

        // Outliner rows: depth, icon, name, state (+ open, l last child, x greyed)
        const nodes = [
            [0, 'cam', 'persp'], [0, 'cam', 'top'], [0, 'cam', 'front'], [0, 'cam', 'side'], [0, 'cam', 'left'], [0, 'cam', 'back'],
            [0, 'nurbs', 'nurbsCircle1'], [0, 'nurbs', 'nurbsCircle2'], [0, 'nurbs', 'nurbsCircle3'], [0, 'nurbs', 'nurbsCircle4'],
            [0, 'joint', 'JT_ROOT_01_T_POSE', '+'], [1, 'joint', 'JT_SPINE_01', '+'], [2, 'joint', 'JT_SPINE_02', '+'], [3, 'joint', 'JT_SPINE_03', '+'],
            [4, 'joint', 'JT_NECK_01', '+'], [5, 'joint', 'JT_HEAD_01', '+'],
            [6, 'mesh', 'PS_HEAD_01'], [6, 'mesh', 'PS_FACE_01'], [6, 'mesh', 'PS_FACE_02', 'x'], [6, 'mesh', 'MASH1_Color1_Map_H', 'x'],
            [6, 'mesh', 'PS_NECK_ELE_04'], [6, 'mesh', 'PS_R_EYE_RING_01'], [6, 'mesh', 'PS_R_EYE_RING_02'], [6, 'mesh', 'PS_R_EYE_01'], [6, 'mesh', 'PS_L_EYE_01', 'l'],
            [5, 'mesh', 'PS_NECK_ELE_02'], [5, 'mesh', 'PS_NECK_ELE_03', 'l'],
            [4, 'joint', 'JT_L_SHOULDER_01', '+'], [5, 'joint', 'JT_L_ELBOW_01', '+l'], [6, 'joint', 'JT_L_WRIST_01', '+l'],
            [7, 'mesh', 'PS_L_HAND_ELE_01'], [7, 'mesh', 'PS_L_HAND_ELE_02'], [7, 'mesh', 'PS_L_WRIST_01'], [7, 'group', 'L_CLAW_G', '+l'],
            [8, 'mesh', 'L_WRIST_RING', '+']
        ];
        document.getElementById('outliner').innerHTML = nodes.map(([depth, icon, name, state = ''], i) => {
            let guides = '';
            for (let k = 0; k < depth - 1; k++) {
                const ended = i > 27 && (k === 4 || k === 5 || (k === 6 && i > 33));
                guides += `<span class="w-[3px] ml-[3px] h-full ${ended ? '' : 'border-l border-[#7a7a7a]'}"></span>`;
            }
            if (depth) {
                guides += `<span class="w-[3px] ml-[3px] h-full"><span class="block h-1/2 border-l border-b border-[#7a7a7a]"></span><span class="block h-1/2 ${state.includes('l') ? '' : 'border-l border-[#7a7a7a]'}"></span></span>`;
            }
            let box = '<span class="w-[6px]"></span>';
            if (state.includes('+')) box = '<span class="w-[5px] h-[5px] mr-px border border-[#8a8a8a] flex items-center"><span class="w-full h-px bg-[#aaaaaa]"></span></span>';
            else if (depth) box = '<span class="w-[6px] flex items-center"><span class="w-[3px] h-px bg-[#7a7a7a]"></span><span class="size-[2px] rounded-full bg-[#bbbbbb]"></span></span>';
            return `<li class="flex items-center whitespace-nowrap overflow-hidden [&>*]:shrink-0 ${state === 'x' ? 'text-[#6c6c6c]' : ''}">${guides}${box}${svg(icon, 'size-[8px] ml-px mr-px')}<span>${name}</span></li>`;
        }).join('');

        // Channel box
        const channels = [['Translate X', 0], ['Translate Y', 0], ['Translate Z', 0], ['Rotate X', 0], ['Rotate Y', 0], ['Rotate Z', 0], ['Scale X', 1], ['Scale Y', 1], ['Scale Z', 1], ['Visibility', 'on'], ['F B CURL', 0], ['L R CURL', -1]];
        document.getElementById('channels').innerHTML = channels.map(([name, value], i) => `<tr class="h-[8px]">
            <td class="text-right p-0 pr-[3px]"><label for="ch${i}">${name}</label></td>
            <td class="w-[39px] p-0"><input id="ch${i}" value="${value}" class="block w-[36px] h-[7px] px-[4px] outline-none ${name === 'Rotate Z' ? 'bg-[#5285a6] text-white' : 'bg-[#2b2b2b]'}"></td>
        </tr>`).join('');

        // Time slider, one label every 10 frames
        let ticks = '';
        for (let f = 0; f <= 500; f += 10) {
            ticks += `<li class="basis-[2%] shrink-0 min-w-0 flex flex-col justify-between pl-[2px] pb-px"><span class="leading-[8px]">${f}</span>
                <span class="flex h-[6px] border-l border-[#a0a0a0] ${f ? '' : 'text-[#eeeeee] leading-[6px] pl-[2px]'}">${f ? '' : '1'}</span></li>`;
        }
        document.getElementById('timeline').innerHTML = ticks;

        // Driven key lists
        const attrs = ['Visibility', 'Translate X', 'Translate Y', 'Translate Z', 'Rotate X', 'Rotate Y', 'Rotate Z', 'Scale X', 'Scale Y', 'Scale Z'];
        function fillList(id, items, selected, cls) {
            const ul = document.getElementById(id);
            ul.className = 'grid auto-rows-fr content-start ' + cls;
            ul.innerHTML = items.map(t => `<li class="flex items-center ${selected.includes(t) ? 'bg-[#5285a6] text-white' : ''}">${t}</li>`).join('');
        }
        const spine = ['JT_SPINE_01', 'JT_SPINE_02', 'JT_SPINE_03'];
        fillList('driverNodes', ['ROOT_CNTRL'], ['ROOT_CNTRL'], 'h-[7px]');
        fillList('driverAttrs', [...attrs, 'F B CURL', 'L R CURL'], ['L R CURL'], 'h-[77px]');
        fillList('drivenNodes', spine, spine, 'h-[19px]');
        fillList('drivenAttrs', attrs, ['Rotate Z'], 'h-[64px]');

        // Viewport: ground grid
        let scene = '<g stroke="#4c4c4c" stroke-width=".6" fill="none">';
        for (let i = 0; i <= 24; i++) {
            const t = i / 24;
            scene += `<path d="M${312 + 154 * t} ${387 - 3 * t}L${287 + 193 * t} 441" ${i === 12 ? 'stroke="#222" stroke-width="1"' : ''}/>`;
        }
        for (let i = 0; i <= 17; i++) {
            const y = 387 + 2.2 * i + 0.06 * i * i, k = (y - 387) / 54;
            scene += `<path d="M${312 - 25 * k} ${y}L${466 + 14 * k} ${y - 3}" ${i === 12 ? 'stroke="#222" stroke-width="1"' : ''}/>`;
        }
        scene += '</g>';

        // Viewport: skeleton, each bone drawn from parent joint to child joint
        const bones = [[383, 310, 382, 285], [382, 285, 371, 263], [371, 263, 343, 244], [343, 244, 340, 198], [340, 198, 347, 141], [347, 141, 355, 82],
            [343, 244, 311, 239], [311, 239, 295, 237], [343, 244, 328, 287], [328, 287, 322, 339], [322, 339, 315, 389],
            [383, 310, 353, 311], [383, 310, 414, 310], [353, 311, 355, 363], [355, 363, 356, 414], [414, 310, 414, 363], [414, 363, 414, 413]];
        scene += '<g stroke="#2a1646" stroke-width=".6" fill="none">';
        bones.forEach(([x1, y1, x2, y2]) => {
            const len = Math.hypot(x2 - x1, y2 - y1), ux = (x2 - x1) / len, uy = (y2 - y1) / len;
            const mx = x1 + ux * 4, my = y1 + uy * 4;
            scene += `<path fill="#2a1646" fill-opacity=".12" d="M${x1} ${y1}L${mx - uy * 2.5} ${my + ux * 2.5}L${x2} ${y2}L${mx + uy * 2.5} ${my - ux * 2.5}ZL${x2} ${y2}"/>
                <circle cx="${x1}" cy="${y1}" r="2"/><circle cx="${x2}" cy="${y2}" r="2"/>`;
        });
        scene += '</g>';

        // Viewport: rotate manipulator, control curve and axis
        scene += `<g fill="none">
            <circle cx="383" cy="311.500" r="44.500" stroke="#555" stroke-width=".8"/>
            <circle cx="383" cy="311.500" r="51.500" stroke="#7cc4e4" stroke-width="1.200"/>
            <path stroke="#e6dc4a" stroke-width="1.200" d="M339.300 303A44.500 44.500 0 0 1 427.500 311.500V319"/>
            <path stroke="#66e032" stroke-width="1.200" d="M338.500 311C338 328 428 328 427.500 312"/>
            <path stroke="#68dca0" d="M328 314.500L345 303 384 298 425 302 437 313.500 408 324.500 354 325.500Z"/>
            <path stroke="#e04848" d="M382 267Q379 311 383 356"/>
            <ellipse cx="385.500" cy="421.500" rx="7" ry="3" stroke="#142a66"/><ellipse cx="385.500" cy="421.500" rx="4" ry="3" stroke="#142a66" stroke-width=".6"/>
            <path stroke="#3ad03a" d="M170 427V419"/><path stroke="#e03030" d="M170 427l7 2"/><path stroke="#3050e0" d="M170 427l-2 3"/>
        </g>
        <text x="434" y="437" text-anchor="middle" font-size="6" font-weight="bold" fill="#fff">persp</text>
        <text x="167" y="424" font-size="5" fill="#3ad03a">Y</text><text x="174" y="428" font-size="5" fill="#e03030">X</text>`;
        document.getElementById('scene').innerHTML = scene;
    </script>
</body>

</html>
